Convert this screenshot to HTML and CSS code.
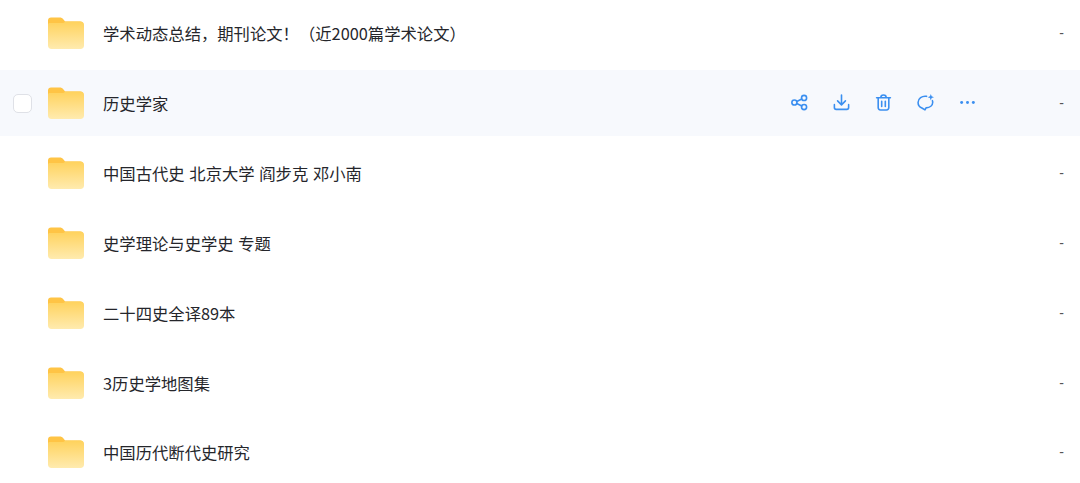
FILE: index.html
```html
<!DOCTYPE html>
<html lang="zh">
<head>
<meta charset="utf-8">
<title>文件列表</title>
<link rel="stylesheet" href="styles.css">
</head>
<body>
<svg width="0" height="0" class="defs">
<defs>
<linearGradient id="fg" x1="0" y1="0" x2="0" y2="1"><stop offset="0" stop-color="#ffd25c"/><stop offset="1" stop-color="#ffebaf"/></linearGradient>
<symbol id="folder" viewBox="0 0 36 32"><path d="M3 .5h8.500c1.800 0 2.800.6 4 2l1.600 2h14.900c2.200 0 3.500 1.300 3.500 3.500v4H0V3.500C0 1.700 1.200.5 3 .5z" fill="#ffc445"/><path d="M0 7.500c0-.8.700-1.500 1.500-1.500h12.800c1.200 0 2-.5 2.800-1.500h15.400c2.200 0 3.500 1.300 3.500 3.500v20.500c0 2.200-1.300 3.500-3.500 3.500H3.500C1.300 32 0 30.700 0 28.500z" fill="url(#fg)"/></symbol>
</defs>
</svg>
<main class="list">
<div class="row"><span class="check"></span><svg class="folder"><use href="#folder"/></svg><span class="name">学术动态总结，期刊论文！（近2000篇学术论文）</span><span class="dash">-</span></div>
<div class="row active"><span class="check on"></span><svg class="folder"><use href="#folder"/></svg><span class="name">历史学家</span>
<div class="actions">
<svg viewBox="0 0 16 16"><circle cx="3.200" cy="8" r="2.400"/><circle cx="12.300" cy="3.700" r="2.400"/><circle cx="12.300" cy="12.300" r="2.400"/><path d="M5.400 7 10.200 4.700M5.400 9l4.800 2.300"/></svg>
<svg viewBox="0 0 16 16"><path d="M8 1v9M4.300 6.500 8 10.200l3.700-3.700M1.300 10v2.800c0 1 .7 1.700 1.700 1.700h10c1 0 1.700-.7 1.700-1.700V10"/></svg>
<svg viewBox="0 0 16 16"><path d="M1.500 3.500h13M5.500 3.300C5.500 1.900 6.500 1 8 1s2.500.9 2.500 2.300M3 3.500v9.300c0 1.300.9 2.200 2.200 2.200h5.600c1.300 0 2.200-.9 2.200-2.200V3.500M6.300 6.800v4.900M9.700 6.800v4.900"/></svg>
<svg viewBox="0 0 16 16"><path d="M9 2.200C4.700 1.500 1 4.200 1 8c0 2.500 1.500 4.300 3.600 5.200L7.500 15l1-1.900c3.600-.2 6.300-2.400 6.300-5.300 0-.6-.1-1-.3-1.500"/><path class="solid" d="M13 0l.8 2.200 2.200.8-2.200.8L13 6l-.8-2.200L10 3l2.200-.8z"/></svg>
<svg viewBox="0 0 16 16"><circle class="solid" cx="2.500" cy="8" r="1.400"/><circle class="solid" cx="8" cy="8" r="1.400"/><circle class="solid" cx="13.500" cy="8" r="1.400"/></svg>
</div><span class="dash">-</span></div>
<div class="row"><span class="check"></span><svg class="folder"><use href="#folder"/></svg><span class="name">中国古代史 北京大学 阎步克 邓小南</span><span class="dash">-</span></div>
<div class="row"><span class="check"></span><svg class="folder"><use href="#folder"/></svg><span class="name">史学理论与史学史 专题</span><span class="dash">-</span></div>
<div class="row"><span class="check"></span><svg class="folder"><use href="#folder"/></svg><span class="name">二十四史全译89本</span><span class="dash">-</span></div>
<div class="row"><span class="check"></span><svg class="folder"><use href="#folder"/></svg><span class="name">3历史学地图集</span><span class="dash">-</span></div>
<div class="row"><span class="check"></span><svg class="folder"><use href="#folder"/></svg><span class="name">中国历代断代史研究</span><span class="dash">-</span></div>
</main>
</body>
</html>
```

FILE: styles.css
```css
* { box-sizing: border-box; }
html, body { margin: 0; height: 483px; overflow: hidden; background: #fff; }
.defs { position: absolute; }
.list { display: flex; flex-direction: column; padding-top: .5px; gap: 4px; font-family: "Noto Sans CJK SC", "Noto Sans", sans-serif; color: #25262b; }
.row { height: 65.83px; display: flex; align-items: center; padding: 0 16px 0 13px; }
.active { background: #f7f9fd; }
.check { width: 18.500px; height: 19px; flex: none; margin-right: 16.500px; border-radius: 5px; }
.check.on { background: #fff; border: 1.5px solid #dfe1e7; }
.folder { width: 36px; height: 32px; flex: none; margin-right: 19px; }
.name { font-size: 16.33px; line-height: 24px; flex: 1; white-space: nowrap; word-spacing: 1px; }
.dash { font-size: 14px; color: #555; font-family: "Liberation Sans", sans-serif; margin-left: auto; }
.actions { display: flex; gap: 25px; margin-right: 83px; margin-bottom: 1px; }
.actions svg { width: 17px; height: 17px; fill: none; stroke: #3b8ff0; stroke-width: 1.500; stroke-linecap: round; stroke-linejoin: round; overflow: visible; }
.actions .solid { fill: #3b8ff0; stroke: none; }
```
